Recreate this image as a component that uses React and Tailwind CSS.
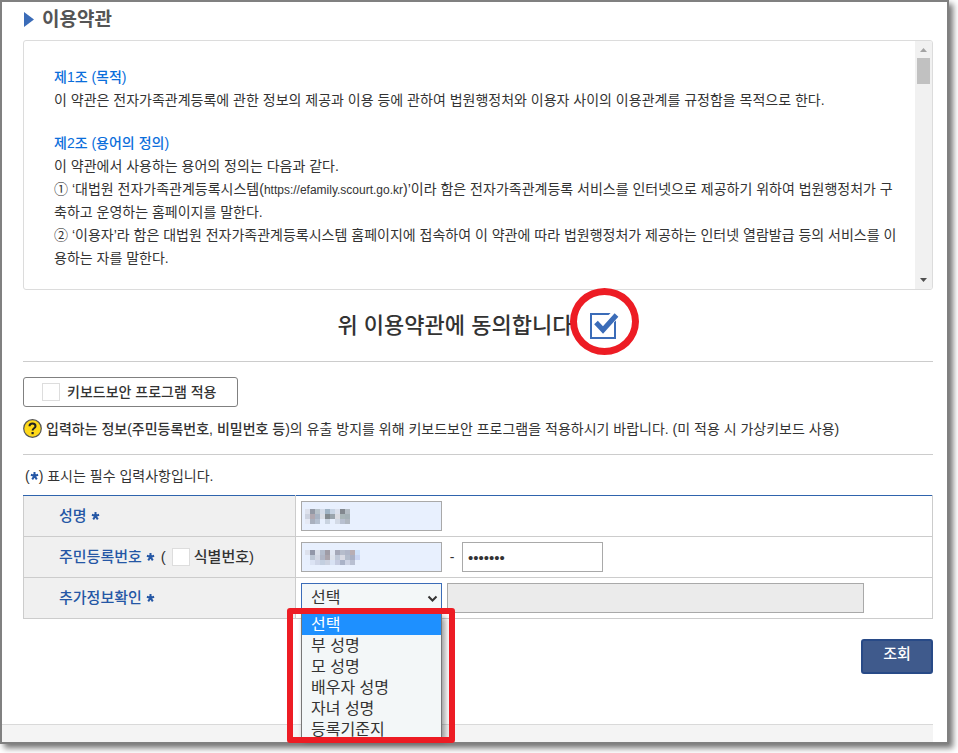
import { useState } from 'react';

const extraInfoOptions = ['선택', '부 성명', '모 성명', '배우자 성명', '자녀 성명', '등록기준지'];

// masked values, one colour per 5px block
const nameMask = [
  ['#dde1ec', '#9399a5', '#b7c2ca', '#d3dbe8', '#9fb3c4', '#c7d3e3', '#dbe0ec', '#82888f', '#b3bcc4'],
  ['#cdd3e0', '#b0a8b0', '#a8b4c4', '#d9dde5', '#838b90', '#9aa4ac', '#dbdce2', '#a9b6b9', '#a5b2b8'],
  ['#e5e9f4', '#a9b0be', '#b5c0d0', '#e7effd', '#c9d3e0', '#e7effd', '#d3dae6', '#b8c0d0', '#b0b7c0'],
];
const idMask = [
  ['#dde1ec', '#9297a8', '#d9dee8', '#b3bccc', '#9f9ca6', '#e0e6f2', '#a5a8b8', '#b6bdcc', '#b0b6c8', '#b8aeb4', '#cfe2fb'],
  ['#e7effd', '#bcc6d4', '#d3d8e4', '#b0b6c6', '#aaa4ac', '#dde2ec', '#bfc8d8', '#d8dae4', '#b3bccc', '#a9b0c4', '#c9d5f4'],
  ['#e7effd', '#dbe3f4', '#cfd6e8', '#c3cfe0', '#ccd2e0', '#d8e2f4', '#c5cbe0', '#aab3c8', '#cdd3e4', '#b9c0d2', '#e7effd'],
];

function Mask({ rows }) {
  return (
    <svg
      className="absolute left-1 top-2 pointer-events-none"
      width={rows[0].length * 5}
      height={rows.length * 5}
      shapeRendering="crispEdges"
      aria-hidden="true"
    >
      {rows.map((row, y) =>
        row.map((fill, x) => <rect key={`${x}-${y}`} x={x * 5} y={y * 5} width="5" height="5" fill={fill} />)
      )}
    </svg>
  );
}

function Star() {
  return (
    <svg className="inline-block align-baseline" width="9" height="10" viewBox="0 0 9 10" aria-hidden="true">
      <path d="M4.5 5V1M4.5 5L.9 3.8M4.5 5L8.1 3.8M4.5 5L2.2 8.4M4.5 5l2.3 3.4" stroke="#2557a5" strokeWidth="2" />
    </svg>
  );
}

function TermsBox() {
  return (
    <section className="flex border border-[#dcdcdc] rounded-[3px] overflow-hidden mt-2">
      <div className="flex-1 min-w-0 h-[248px] overflow-hidden pl-[30px] pt-[25px] text-sm leading-[23px] whitespace-nowrap">
        <h3 className="font-medium text-[#0a6edb]">제1조 (목적)</h3>
        <p>
          이 약관은 전자가족관계등록에 관한 정보의 제공과 이용 등에 관하여 법원행정처와 이용자 사이의 이용관계를
          규정함을 목적으로 한다.
        </p>
        <h3 className="font-medium text-[#0a6edb] mt-5">제2조 (용어의 정의)</h3>
        <p>이 약관에서 사용하는 용어의 정의는 다음과 같다.</p>
        <p>
          ① ‘대법원 전자가족관계등록시스템(<span className="text-xs">https://efamily.scourt.go.kr</span>)’이라 함은
          전자가족관계등록 서비스를 인터넷으로 제공하기 위하여 법원행정처가 구
          <br />
          축하고 운영하는 홈페이지를 말한다.
        </p>
        <p>
          ② ‘이용자’라 함은 대법원 전자가족관계등록시스템 홈페이지에 접속하여 이 약관에 따라 법원행정처가 제공하는
          인터넷 열람발급 등의 서비스를 이
          <br />
          용하는 자를 말한다.
        </p>
      </div>
      <div className="w-[17px] bg-[#f1f1f1] flex flex-col items-center" aria-hidden="true">
        <svg width="17" height="17">
          <path d="M5 11L8.5 7 12 11z" fill="#a3a3a3" />
        </svg>
        <div className="w-[13px] h-[26px] bg-[#c1c1c1]" />
        <svg className="mt-auto" width="17" height="17">
          <path d="M5 6L8.5 10 12 6z" fill="#505050" />
        </svg>
      </div>
    </section>
  );
}

function AgreeRow() {
  const [agreed, setAgreed] = useState(true);

  return (
    <div className="flex items-center justify-center gap-3 h-[72px] border-b border-[#ccc]">
      <label htmlFor="agree" className="text-[22px] leading-8 font-medium text-[#333]">
        위 이용약관에 동의합니다.
      </label>
      <span className="relative block w-7 h-7">
        <input
          id="agree"
          type="checkbox"
          checked={agreed}
          onChange={(e) => setAgreed(e.target.checked)}
          className="appearance-none block w-[26px] h-[26px] mt-px border-2 border-[#3b6cb8] bg-white"
        />
        {agreed && (
          <svg className="absolute left-0 top-0 pointer-events-none" width="30" height="28" aria-hidden="true">
            <path d="M20 8L28 0" fill="none" stroke="#fff" strokeWidth="9" />
            <path d="M6 10.500l7 7.500L26.500 3" fill="none" stroke="#3b6cb8" strokeWidth="5" />
          </svg>
        )}
        <span className="absolute -left-5 -top-6 w-[69px] h-[67px] rounded-[50%] border-[7px] border-[#ed1c24] pointer-events-none" />
      </span>
    </div>
  );
}

function ExtraInfoSelect() {
  const [value, setValue] = useState('선택');

  return (
    <div className="relative">
      <select
        id="extra"
        value={value}
        onChange={(e) => setValue(e.target.value)}
        className="appearance-none block w-[141px] h-[30px] pl-[9px] border border-[#3b6cb8] bg-[#f3f7f8] text-base leading-6"
      >
        {extraInfoOptions.map((option) => (
          <option key={option}>{option}</option>
        ))}
      </select>
      <svg className="absolute right-1 top-3 pointer-events-none" width="11" height="8" aria-hidden="true">
        <path d="M1.500 1.500l4 4 4-4" fill="none" stroke="#333" strokeWidth="2" />
      </svg>
      <ul className="absolute left-0 top-[31px] z-10 w-[141px] h-[124px] overflow-hidden border-x border-[#777] bg-[#f3f7f8] shadow-[3px_3px_6px_rgba(0,0,0,0.4)]">
        {extraInfoOptions.map((option) => (
          <li key={option}>
            <button
              type="button"
              onClick={() => setValue(option)}
              className={`block w-full h-[21px] pl-[9px] text-left text-base leading-5 ${
                option === value ? 'bg-[#1e90ff] text-white' : 'text-[#333]'
              }`}
            >
              {option}
            </button>
          </li>
        ))}
      </ul>
      <span className="absolute -left-3.5 top-[25px] z-20 w-[168px] h-[135px] rounded-[3px] border-[6px] border-[#ed1c24] pointer-events-none" />
    </div>
  );
}

function ApplicantTable() {
  const th = 'w-[272px] h-[41px] border border-[#ccc] bg-[#f0f0f0] pl-[35px] text-left text-[15px] font-medium text-[#2557a5]';
  const td = 'border border-[#ccc] pl-[5px]';
  const input = 'block w-[141px] h-[30px] border border-[#a9a9a9] px-[5px] text-[15px]';

  return (
    <table className="w-full border-collapse mt-2">
      <tbody>
        <tr>
          <th className={`${th} border-t-[#2f64ad]`}>
            <label htmlFor="name">성명</label> <Star />
          </th>
          <td className={`${td} border-t-[#2f64ad]`}>
            <div className="relative">
              <input id="name" type="text" className={`${input} bg-[#e8f0fe]`} />
              <Mask rows={nameMask} />
            </div>
          </td>
        </tr>
        <tr>
          <th className={th}>
            <div className="flex items-center">
              <label htmlFor="rrn">주민등록번호</label>
              <span className="ml-1 mr-1.5 flex">
                <Star />
              </span>
              <span className="text-[#333]">(</span>
              <input id="idno" type="checkbox" className="appearance-none ml-1.5 mr-1 w-[18px] h-[18px] border border-[#ddd] bg-white" />
              <label htmlFor="idno" className="text-[#333]">
                식별번호)
              </label>
            </div>
          </th>
          <td className={td}>
            <div className="relative flex items-center">
              <input id="rrn" type="text" className={`${input} bg-[#e8f0fe]`} />
              <Mask rows={idMask} />
              <span className="w-5 text-center text-sm">-</span>
              <input type="password" aria-label="주민등록번호 뒷자리" defaultValue="1234567" className={`${input} bg-white`} />
            </div>
          </td>
        </tr>
        <tr>
          <th className={th}>
            <label htmlFor="extra">추가정보확인</label> <Star />
          </th>
          <td className={td}>
            <div className="flex gap-[5px]">
              <ExtraInfoSelect />
              <input
                type="text"
                disabled
                aria-label="추가정보"
                className="flex-1 min-w-0 h-[30px] mr-[68px] border border-[#a9a9a9] bg-[#ebebeb] px-1.5"
              />
            </div>
          </td>
        </tr>
      </tbody>
    </table>
  );
}

export default function App() {
  return (
    <div className="pr-[9px] pb-[9px] overflow-hidden bg-white font-['Liberation_Sans','Noto_Sans_CJK_KR',sans-serif] text-[#333]">
      <main className="border-2 border-[#808080] bg-white shadow-[4px_4px_6px_rgba(0,0,0,0.55)]">
        <div className="pl-[21px] pr-3.5">
          <h2 className="flex items-center gap-[7px] h-[30px] pt-1.5 text-[19px] font-bold text-[#555]">
            <svg width="12" height="15" className="mb-0.5" aria-hidden="true">
              <path d="M1 0l10 7.500L1 15z" fill="#3b6cb8" />
            </svg>
            이용약관
          </h2>
          <TermsBox />
          <AgreeRow />

          <div className="mt-[15px] inline-flex items-center gap-[7px] h-[30px] pl-[18px] pr-[21px] border border-[#808080] rounded-[3px] align-top">
            <input id="keyboard" type="checkbox" className="appearance-none w-[18px] h-[18px] border border-[#ddd] bg-white" />
            <label htmlFor="keyboard" className="text-sm font-medium">
              키보드보안 프로그램 적용
            </label>
          </div>

          <p className="flex items-center h-12 pb-1 gap-1 border-b border-[#ccc] text-sm whitespace-nowrap">
            <svg width="19" height="19" viewBox="0 0 19 19" aria-hidden="true">
              <circle cx="9.500" cy="9.500" r="8.800" fill="#ffd91a" stroke="#555" strokeWidth="1.200" />
              <path d="M6.500 7.200c0-3.600 6-3.600 6 0 0 2.200-2.900 2-2.900 4.300" fill="none" stroke="#222" strokeWidth="2" />
              <rect x="8.500" y="13" width="2.200" height="2.200" fill="#222" />
            </svg>
            <span>
              <strong className="font-medium">입력하는 정보(주민등록번호, 비밀번호 등)</strong>의 유출 방지를 위해 키보드보안
              프로그램을 적용하시기 바랍니다. (미 적용 시 가상키보드 사용)
            </span>
          </p>

          <p className="mt-[11px] pl-0.5 text-sm leading-[21px]">
            (<Star />) 표시는 필수 입력사항입니다.
          </p>
          <ApplicantTable />

          <div className="flex justify-end mt-5 mb-[50px]">
            <button
              type="button"
              className="w-[72px] h-[35px] pb-1 border-2 border-[#284a87] rounded-[3px] bg-[#3f5a8c] text-[15px] font-medium text-white"
            >
              조회
            </button>
          </div>
        </div>
        <footer className="mr-3.5 h-[18px] border-t border-[#d9d9d9] bg-[#f4f4f4]" />
      </main>
    </div>
  );
}
